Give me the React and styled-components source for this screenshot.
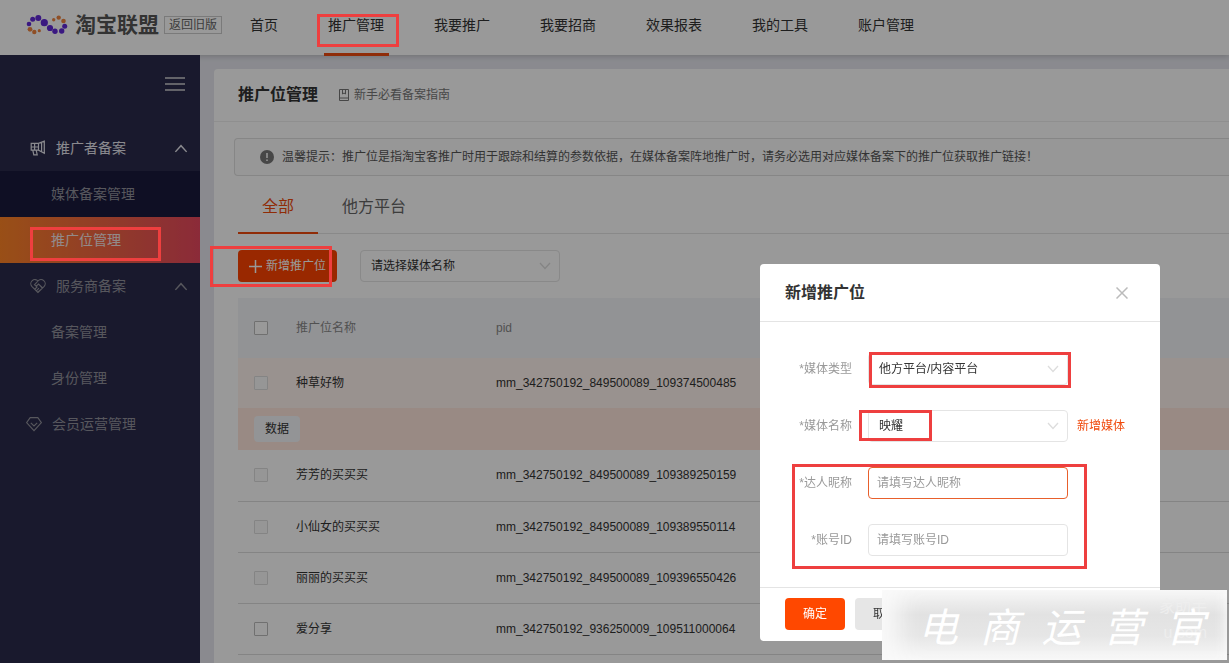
import React, { useState } from 'react';
import styled, { createGlobalStyle, css } from 'styled-components';

const NAV = ['首页', '推广管理', '我要推广', '我要招商', '效果报表', '我的工具', '账户管理'];

const ROWS = [
  { name: '种草好物', pid: 'mm_342750192_849500089_109374500485', locked: true, active: true },
  { name: '芳芳的买买买', pid: 'mm_342750192_849500089_109389250159', locked: true },
  { name: '小仙女的买买买', pid: 'mm_342750192_849500089_109389550114', locked: true },
  { name: '丽丽的买买买', pid: 'mm_342750192_849500089_109396550426', locked: true },
  { name: '爱分享', pid: 'mm_342750192_936250009_109511000064' },
];

const Logo = () => (
  <svg width="42" height="20" viewBox="0 0 42 20">
    <g fill="#6128d8">
      <circle cx="3" cy="9" r="2.3" />
      <circle cx="6.7" cy="4.3" r="2.5" />
      <circle cx="12.3" cy="3" r="3" />
      <circle cx="18.3" cy="7.7" r="3.6" />
      <circle cx="24" cy="13" r="3.1" />
      <circle cx="29" cy="16.3" r="2.7" />
      <circle cx="35.7" cy="16" r="2.7" />
      <circle cx="38.7" cy="11.3" r="2.5" />
    </g>
    <g fill="#ee8440">
      <circle cx="4" cy="14.3" r="2.4" />
      <circle cx="8.3" cy="17" r="2.2" />
      <circle cx="13.3" cy="15.7" r="1.6" />
      <circle cx="27.7" cy="4.7" r="1.7" />
      <circle cx="32.7" cy="2.6" r="2.2" />
      <circle cx="37.5" cy="6" r="2.3" />
    </g>
  </svg>
);

const Chevron = ({ up, size = 12 }) => (
  <svg width={size} height={size / 2 + 2} viewBox="0 0 12 8" fill="none" stroke="currentColor" strokeWidth="1.3">
    <path d={up ? 'M1 7 6 1.5 11 7' : 'M1 1 6 6.5 11 1'} />
  </svg>
);

const HornIcon = () => (
  <svg width="16" height="16" viewBox="0 0 16 16" fill="none" stroke="currentColor" strokeWidth="1.2">
    <path d="M1.2 3.4h7.3l5.8-2.2v12l-5.8-3H1.2zM8.5 3.4v6.8M11.6 2.6v8.8M2.8 10.2l1 4.6h3.4l-1-4.6M4.6 3.4v6.8M1.2 7h7.3" />
  </svg>
);

const HeartIcon = () => (
  <svg width="16" height="16" viewBox="0 0 16 16" fill="none" stroke="currentColor" strokeWidth="1.1">
    <path d="M8 14.5 1.8 8.3A4 4 0 0 1 8 3a4 4 0 0 1 6.2 5.3zM8 3 4.5 6.8l1.7 1.4L8.5 6l4.2 4M5 11l2.4-2.4M6.6 12.6 9 10.2M8.5 6l3.8 4.2M8.2 13.8l2.4-2.2" />
  </svg>
);

const GemIcon = () => (
  <svg width="16" height="16" viewBox="0 0 16 16" fill="none" stroke="currentColor" strokeWidth="1.1">
    <path d="M4.2 1.6h7.6L15.4 6.6 8 14.6.6 6.6zM4.8 6.8 8 10l3.2-3.2" />
  </svg>
);

const BookIcon = () => (
  <svg width="12" height="12" viewBox="0 0 12 12" fill="none" stroke="currentColor">
    <path d="M1.5.5h9v11h-9zM1.5 9h9M4.5.5V5l1.5-1 1.5 1V.5" />
  </svg>
);

const SelectBox = ({ id, label, value, onChange, options }) => (
  <SelectWrap>
    <Select id={id} aria-label={label} value={value} onChange={e => onChange(e.target.value)}>
      {options.map(option => (
        <option key={option}>{option}</option>
      ))}
    </Select>
    <Chevron />
  </SelectWrap>
);

const SlotDialog = ({ onClose }) => {
  const [type, setType] = useState('他方平台/内容平台');
  const [media, setMedia] = useState('映耀');

  return (
    <DialogLayer>
      <Dialog role="dialog" aria-labelledby="dialog-title">
        <DialogHead>
          <DialogTitle id="dialog-title">新增推广位</DialogTitle>
          <CloseButton type="button" aria-label="关闭" onClick={onClose}>
            <svg width="12" height="12" viewBox="0 0 12 12" stroke="currentColor" strokeWidth="1.5">
              <path d="M.5.5l11 11M11.5.5l-11 11" />
            </svg>
          </CloseButton>
        </DialogHead>
        <DialogBody>
          <Field>
            <FieldLabel htmlFor="type">*媒体类型</FieldLabel>
            <Marked>
              <SelectBox id="type" value={type} onChange={setType} options={['他方平台/内容平台']} />
              <Mark $top={-1} $right={-3} $bottom={-3} $left={1} />
            </Marked>
          </Field>
          <Field>
            <FieldLabel htmlFor="media">*媒体名称</FieldLabel>
            <Marked>
              <SelectBox id="media" value={media} onChange={setMedia} options={['映耀']} />
              <Mark $top={0} $right={136} $bottom={1} $left={-9} />
            </Marked>
            <AddMedia href="#media">新增媒体</AddMedia>
          </Field>
          <FieldGroup>
            <Field>
              <FieldLabel htmlFor="nick">*达人昵称</FieldLabel>
              <Input id="nick" placeholder="请填写达人昵称" $active />
            </Field>
            <Field>
              <FieldLabel htmlFor="account">*账号ID</FieldLabel>
              <Input id="account" placeholder="请填写账号ID" />
            </Field>
            <Mark $top={-3} $right={73} $bottom={-13} $left={32} />
          </FieldGroup>
        </DialogBody>
        <DialogFoot>
          <FootButton type="button" $primary>确定</FootButton>
          <FootButton type="button" onClick={onClose}>取消</FootButton>
        </DialogFoot>
      </Dialog>
    </DialogLayer>
  );
};

const App = () => {
  const [open, setOpen] = useState(true);
  const [filter, setFilter] = useState('请选择媒体名称');

  return (
    <Page>
      <GlobalStyle />
      <Header>
        <Brand>
          <Logo />
          <BrandName>淘宝联盟</BrandName>
        </Brand>
        <OldLink href="#old">返回旧版</OldLink>
        <Nav>
          {NAV.map(item => (
            <NavLink key={item} href="#nav" $active={item === '推广管理'}>
              {item}
              {item === '推广管理' && <Mark $top={14} $right={-15} $bottom={8} $left={-11} />}
            </NavLink>
          ))}
        </Nav>
      </Header>
      <Columns>
        <Sidebar>
          <MenuToggle type="button" aria-label="收起菜单">
            <svg width="20" height="14" viewBox="0 0 20 14" stroke="currentColor" strokeWidth="2">
              <path d="M0 1h20M0 7h20M0 13h20" />
            </svg>
          </MenuToggle>
          <MenuGroup href="#promoter" $bright>
            <HornIcon />
            <span>推广者备案</span>
            <Chevron up size={14} />
          </MenuGroup>
          <MenuItem href="#media-record" $dark>媒体备案管理</MenuItem>
          <MenuItem href="#slots" $active>
            推广位管理
            <Mark $top={10} $right={39} $bottom={2} $left={30} />
          </MenuItem>
          <MenuGroup href="#provider">
            <HeartIcon />
            <span>服务商备案</span>
            <Chevron up size={14} />
          </MenuGroup>
          <MenuItem href="#record">备案管理</MenuItem>
          <MenuItem href="#identity">身份管理</MenuItem>
          <MenuGroup href="#member" $outer>
            <GemIcon />
            <span>会员运营管理</span>
          </MenuGroup>
        </Sidebar>
        <Panel>
          <PanelHead>
            <PanelTitle>推广位管理</PanelTitle>
            <GuideLink href="#guide">
              <BookIcon />
              新手必看备案指南
            </GuideLink>
          </PanelHead>
          <Notice>
            <svg width="14" height="14" viewBox="0 0 14 14">
              <circle cx="7" cy="7" r="7" fill="#777" />
              <path d="M7 3v5M7 9.5v1.5" stroke="#fff" strokeWidth="1.5" />
            </svg>
            温馨提示：推广位是指淘宝客推广时用于跟踪和结算的参数依据，在媒体备案阵地推广时，请务必选用对应媒体备案下的推广位获取推广链接！
          </Notice>
          <Content>
            <Tabs>
              <Tab type="button" $active>全部</Tab>
              <Tab type="button">他方平台</Tab>
            </Tabs>
            <Toolbar>
              <Marked>
                <AddButton type="button" onClick={() => setOpen(true)}>
                  <svg width="13" height="13" viewBox="0 0 13 13" stroke="currentColor" strokeWidth="1.5">
                    <path d="M6.5 0v13M0 6.5h13" />
                  </svg>
                  新增推广位
                </AddButton>
                <Mark $top={-4} $right={5} $bottom={-5} $left={-28} />
              </Marked>
              <SelectBox label="媒体名称" value={filter} onChange={setFilter} options={['请选择媒体名称']} />
            </Toolbar>
            <Table>
              <thead>
                <HeadRow>
                  <CheckTh><Checkbox type="checkbox" aria-label="全选" /></CheckTh>
                  <NameTh>推广位名称</NameTh>
                  <th>pid</th>
                </HeadRow>
              </thead>
              <tbody>
                {ROWS.map(row => (
                  <React.Fragment key={row.pid}>
                    <Row $active={row.active}>
                      <td><Checkbox type="checkbox" aria-label={row.name} disabled={row.locked} /></td>
                      <td>{row.name}</td>
                      <td>{row.pid}</td>
                    </Row>
                    {row.active && (
                      <ActionRow>
                        <td colSpan={3}><DataButton type="button">数据</DataButton></td>
                      </ActionRow>
                    )}
                  </React.Fragment>
                ))}
              </tbody>
            </Table>
          </Content>
        </Panel>
      </Columns>
      {open && <Mask />}
      {open && <SlotDialog onClose={() => setOpen(false)} />}
      <Watermark>
        <WatermarkNote>家助手<br />u.com</WatermarkNote>
        <span>电</span>
        <span>商</span>
        <span>运</span>
        <span>营</span>
        <span>官</span>
      </Watermark>
    </Page>
  );
};

export default App;

//#region styles
const GlobalStyle = createGlobalStyle`
  * {
    box-sizing: border-box;
  }

  body {
    margin: 0;
    overflow-x: hidden;
    color: #333;
    font: 12px/20px 'Liberation Sans', 'Noto Sans CJK SC', sans-serif;
  }

  a {
    color: inherit;
    text-decoration: none;
  }

  button, input, select {
    font: inherit;
  }

  button {
    padding: 0;
    border: 0;
    background: none;
    cursor: pointer;
  }
`;

const Page = styled.div`
  display: flex;
  flex-direction: column;
  min-height: 100vh;
  background: #e6e7ee;
`;

const Mark = styled.span`
  position: absolute;
  z-index: 30;
  top: ${p => p.$top}px;
  right: ${p => p.$right}px;
  bottom: ${p => p.$bottom}px;
  left: ${p => p.$left}px;
  border: 3px solid #ee3f3f;
  pointer-events: none;
`;

const Marked = styled.div`
  position: relative;
`;

const Header = styled.header`
  display: flex;
  align-items: center;
  height: 55px;
  padding-left: 26px;
  background: #fff;
  box-shadow: 0 1px 6px rgba(0, 0, 0, 0.2);
`;

const Brand = styled.div`
  display: flex;
  align-items: center;
  gap: 7px;
  padding-bottom: 5px;
`;

const BrandName = styled.span`
  color: #555;
  font-size: 21px;
  font-weight: 700;
  line-height: 28px;
`;

const OldLink = styled.a`
  margin: 0 0 5px 5px;
  padding: 0 4px;
  border: 1px solid #ccc;
  color: #666;
  line-height: 16px;
`;

const Nav = styled.nav`
  display: flex;
  align-self: stretch;
  gap: 50px;
  margin-left: 28px;
  white-space: nowrap;
`;

const NavLink = styled.a`
  position: relative;
  font-size: 14px;
  line-height: 50px;

  ${p => p.$active && css`
    &::after {
      content: '';
      position: absolute;
      right: -5px;
      bottom: -1px;
      left: -4px;
      height: 3px;
      background: #ee4a10;
    }
  `}
`;

const Columns = styled.div`
  display: flex;
  flex: 1;
`;

const Sidebar = styled.aside`
  display: flex;
  flex: none;
  flex-direction: column;
  width: 200px;
  background: #2b2b4b;
  color: #92929c;
  font-size: 14px;
`;

const MenuToggle = styled.button`
  align-self: flex-end;
  height: 58px;
  margin: 0 15px 12px 0;
  color: #a5a5b0;

  svg {
    display: block;
  }
`;

const MenuGroup = styled.a`
  display: flex;
  align-items: center;
  gap: 10px;
  height: 46px;
  padding: 0 12px 0 ${p => (p.$outer ? 26 : 30)}px;
  color: ${p => (p.$bright ? '#e6e6ee' : '#92929c')};

  span {
    flex: 1;
  }
`;

const MenuItem = styled.a`
  position: relative;
  padding-left: 51px;
  line-height: 46px;

  ${p => p.$dark && css`
    background: #191a3c;
  `}

  ${p => p.$active && css`
    background: linear-gradient(90deg, #ff8426, #e8485f);
    color: #f4e6e6;
  `}
`;

const Panel = styled.main`
  flex: 1;
  min-width: 0;
  margin: 14px 0 0 14px;
  border-radius: 4px 0 0 0;
  background: #fff;
`;

const PanelHead = styled.div`
  display: flex;
  align-items: center;
  gap: 20px;
  height: 53px;
  padding-left: 24px;
  border-bottom: 1px solid #eee;
`;

const PanelTitle = styled.h1`
  margin: 0;
  font-size: 16px;
  font-weight: 700;
`;

const GuideLink = styled.a`
  display: flex;
  align-items: center;
  gap: 4px;
  color: #777;
`;

const Notice = styled.div`
  display: flex;
  align-items: center;
  gap: 8px;
  height: 38px;
  margin: 16px 0 0 20px;
  padding-left: 25px;
  border: 1px solid #e0e0e0;
  border-right: 0;
  border-radius: 4px 0 0 4px;
  background: #fcfcfc;
  color: #555;
  white-space: nowrap;
`;

const Content = styled.div`
  padding-left: 24px;
`;

const Tabs = styled.div`
  display: flex;
  border-bottom: 1px solid #e4e4e4;
`;

const Tab = styled.button`
  height: 58px;
  margin-bottom: -1px;
  padding: 6px 24px 0;
  border-bottom: 2px solid ${p => (p.$active ? '#f04a0c' : 'transparent')};
  color: ${p => (p.$active ? '#f04a0c' : '#666')};
  font-size: 16px;
`;

const Toolbar = styled.div`
  display: flex;
  gap: 23px;
  padding: 16px 0;
`;

const AddButton = styled.button`
  display: flex;
  align-items: center;
  gap: 4px;
  height: 32px;
  padding: 0 11px;
  border-radius: 4px;
  background: #ff4400;
  color: #fff;
`;

const SelectWrap = styled.div`
  position: relative;
  width: 200px;
  color: #ddd;

  svg {
    position: absolute;
    top: 12px;
    right: 9px;
    pointer-events: none;
  }
`;

const Select = styled.select`
  display: block;
  appearance: none;
  width: 100%;
  height: 32px;
  padding: 0 10px;
  border: 1px solid #e4e4e4;
  border-radius: 4px;
  background: transparent;
  color: #333;
`;

const Table = styled.table`
  width: 100%;
  border-collapse: collapse;

  th {
    padding: 0;
    font-weight: 400;
    text-align: left;
  }

  td {
    padding: 0;
  }

  th:first-child,
  td:first-child {
    padding-left: 16px;
  }
`;

const HeadRow = styled.tr`
  height: 60px;
  background: #f4f5f9;
  color: #888;
`;

const CheckTh = styled.th`
  width: 58px;
`;

const NameTh = styled.th`
  width: 200px;
`;

const Row = styled.tr`
  height: ${p => (p.$active ? 50 : 51)}px;
  border-bottom: ${p => (p.$active ? '0' : '1px solid #ddd')};
  background: ${p => (p.$active ? '#fff4ee' : '#fff')};
`;

const ActionRow = styled.tr`
  height: 42px;
  background: #ffe6dc;
`;

const DataButton = styled.button`
  display: block;
  width: 46px;
  height: 26px;
  border-radius: 4px;
  background: #f6f7fa;
  color: #333;
`;

const Checkbox = styled.input`
  display: block;
  appearance: none;
  width: 14px;
  height: 14px;
  margin: 0;
  border: 1px solid #bbb;
  border-radius: 1px;
  background: #fff;

  &:disabled {
    border-color: #ddd;
    background: #fafafa;
  }
`;

const Mask = styled.div`
  position: fixed;
  z-index: 10;
  inset: 0;
  background: rgba(0, 0, 0, 0.4);
`;

const DialogLayer = styled.div`
  position: fixed;
  z-index: 20;
  inset: 0;
  display: flex;
  align-items: flex-end;
  justify-content: flex-end;
  padding: 0 69px 22px 0;
`;

const Dialog = styled.section`
  width: 400px;
  border-radius: 4px;
  background: #fff;
`;

const DialogHead = styled.div`
  display: flex;
  align-items: center;
  justify-content: space-between;
  height: 58px;
  padding: 0 32px 0 25px;
  border-bottom: 1px solid #e4e4e4;
`;

const DialogTitle = styled.h2`
  margin: 0;
  font-size: 16px;
  font-weight: 700;
`;

const CloseButton = styled.button`
  color: #bbb;

  svg {
    display: block;
  }
`;

const DialogBody = styled.div`
  display: flex;
  flex-direction: column;
  gap: 25px;
  padding: 31px 0;
`;

const FieldGroup = styled.div`
  position: relative;
  display: flex;
  flex-direction: column;
  gap: 25px;
`;

const Field = styled.div`
  display: flex;
  align-items: center;
`;

const FieldLabel = styled.label`
  width: 92px;
  margin-right: 16px;
  color: #999;
  text-align: right;
`;

const Input = styled.input`
  width: 200px;
  height: 32px;
  padding: 0 8px;
  border: 1px solid ${p => (p.$active ? '#e8602c' : '#e4e4e4')};
  border-radius: 4px;
  outline: 0;

  &::placeholder {
    color: #999;
  }
`;

const AddMedia = styled.a`
  margin-left: 9px;
  color: #f04a0c;
`;

const DialogFoot = styled.div`
  display: flex;
  gap: 10px;
  padding: 10px 25px 11px;
  border-top: 1px solid #e4e4e4;
`;

const FootButton = styled.button`
  width: 60px;
  height: 32px;
  border-radius: 4px;
  background: ${p => (p.$primary ? '#ff4800' : '#e6e6e6')};
  color: ${p => (p.$primary ? '#fff' : '#333')};
`;

const Watermark = styled.div`
  position: fixed;
  z-index: 40;
  right: 2px;
  bottom: 3px;
  display: flex;
  align-items: center;
  justify-content: space-between;
  width: 345px;
  height: 70px;
  padding: 0 22px 0 36px;
  background: linear-gradient(180deg, #f6f6f6, #e2e2e2 35%, #e6e6e6 65%, #f8f8f8);
  box-shadow: inset 24px 0 24px -8px #fafafa, inset -8px 0 12px -6px #fafafa;
  color: #fff;
  font: italic 400 40px/60px 'Noto Sans CJK SC', sans-serif;

  span {
    position: relative;
  }
`;

const WatermarkNote = styled.small`
  position: absolute;
  top: 4px;
  right: 20px;
  color: #eee;
  font: 16px/26px 'Liberation Sans', 'Noto Sans CJK SC', sans-serif;
  text-align: right;
`;
//#endregion
